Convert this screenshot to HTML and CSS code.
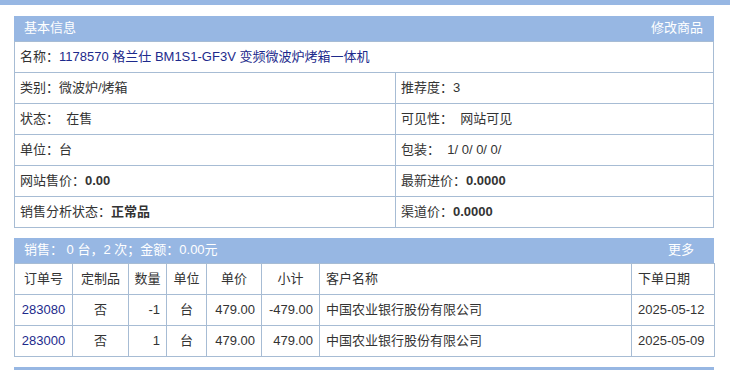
FILE: index.html
```html
<!DOCTYPE html>
<html lang="zh-CN">
<head>
    <meta charset="UTF-8">
    <meta name="viewport" content="width=device-width, initial-scale=1.0">
    <title>商品详情</title>
    <link rel="stylesheet" href="styles.css">
</head>
<body>
    <div class="top-bar"></div>
    <div class="page">
        <div class="panel">
            <div class="panel-head">
                <span>基本信息</span>
                <a href="#">修改商品</a>
            </div>
            <table class="info-table">
                <colgroup>
                    <col class="info-left">
                    <col>
                </colgroup>
                <tr>
                    <td colspan="2">名称：<span class="goods-name">1178570 格兰仕 BM1S1-GF3V 变频微波炉烤箱一体机</span></td>
                </tr>
                <tr>
                    <td>类别：微波炉/烤箱</td>
                    <td>推荐度：3</td>
                </tr>
                <tr>
                    <td>状态：&nbsp; 在售</td>
                    <td>可见性：&nbsp; 网站可见</td>
                </tr>
                <tr>
                    <td>单位：台</td>
                    <td>包装：&nbsp; 1/ 0/ 0/ 0/</td>
                </tr>
                <tr>
                    <td>网站售价：<b>0.00</b></td>
                    <td>最新进价：<b>0.0000</b></td>
                </tr>
                <tr>
                    <td>销售分析状态：<b>正常品</b></td>
                    <td>渠道价：<b>0.0000</b></td>
                </tr>
            </table>
        </div>

        <div class="panel">
            <div class="panel-head">
                <span>销售：&nbsp;0 台，2 次；金额：0.00元</span>
                <a href="#" class="more">更多</a>
            </div>
            <table class="sales-table">
                <colgroup>
                    <col style="width: 58px">
                    <col style="width: 56px">
                    <col style="width: 38px">
                    <col style="width: 40px">
                    <col style="width: 55px">
                    <col style="width: 58px">
                    <col style="width: 312px">
                    <col style="width: 83px">
                </colgroup>
                <tr>
                    <th>订单号</th>
                    <th>定制品</th>
                    <th>数量</th>
                    <th>单位</th>
                    <th>单价</th>
                    <th>小计</th>
                    <th class="left">客户名称</th>
                    <th class="left">下单日期</th>
                </tr>
                <tr>
                    <td><a href="#">283080</a></td>
                    <td>否</td>
                    <td class="num">-1</td>
                    <td>台</td>
                    <td class="num">479.00</td>
                    <td class="num">-479.00</td>
                    <td class="left">中国农业银行股份有限公司</td>
                    <td class="left">2025-05-12</td>
                </tr>
                <tr>
                    <td><a href="#">283000</a></td>
                    <td>否</td>
                    <td class="num">1</td>
                    <td>台</td>
                    <td class="num">479.00</td>
                    <td class="num">479.00</td>
                    <td class="left">中国农业银行股份有限公司</td>
                    <td class="left">2025-05-09</td>
                </tr>
            </table>
        </div>

        <div class="panel">
            <div class="panel-head"></div>
        </div>
    </div>
</body>
</html>
```

FILE: styles.css
```css
body {
    margin: 0;
    padding: 0;
    background-color: #fff;
    color: #333;
    font-family: "Liberation Sans", "Noto Sans CJK SC", Arial, sans-serif;
    font-size: 13px;
    line-height: 16px;
}
.top-bar {
    height: 5px;
    background-color: #97b7e3;
}
.page {
    padding: 11px 16px 0 14px;
}
.panel {
    margin-bottom: 10px;
}
.panel-head {
    height: 25px;
    line-height: 24px;
    padding: 0 11px 0 10px;
    background-color: #97b7e3;
    color: #fff;
    display: flex;
    justify-content: space-between;
}
.panel-head a {
    color: #fff;
    text-decoration: none;
}
.panel-head .more {
    margin-right: 9px;
}
table {
    width: 700px;
    border-collapse: collapse;
    table-layout: fixed;
}
td, th {
    border: 1px solid #a7bcd4;
    height: 30px;
    padding: 0 5px;
    font-weight: normal;
    white-space: nowrap;
}
.info-table td {
    text-align: left;
}
.info-left {
    width: 381px;
}
.goods-name {
    color: #1d2a8c;
}
.sales-table th, .sales-table td {
    text-align: center;
}
.sales-table .num {
    text-align: right;
    padding-right: 6px;
}
.sales-table .left {
    text-align: left;
    padding-left: 6px;
}
.sales-table a {
    color: #1d2a8c;
    text-decoration: none;
}
```
